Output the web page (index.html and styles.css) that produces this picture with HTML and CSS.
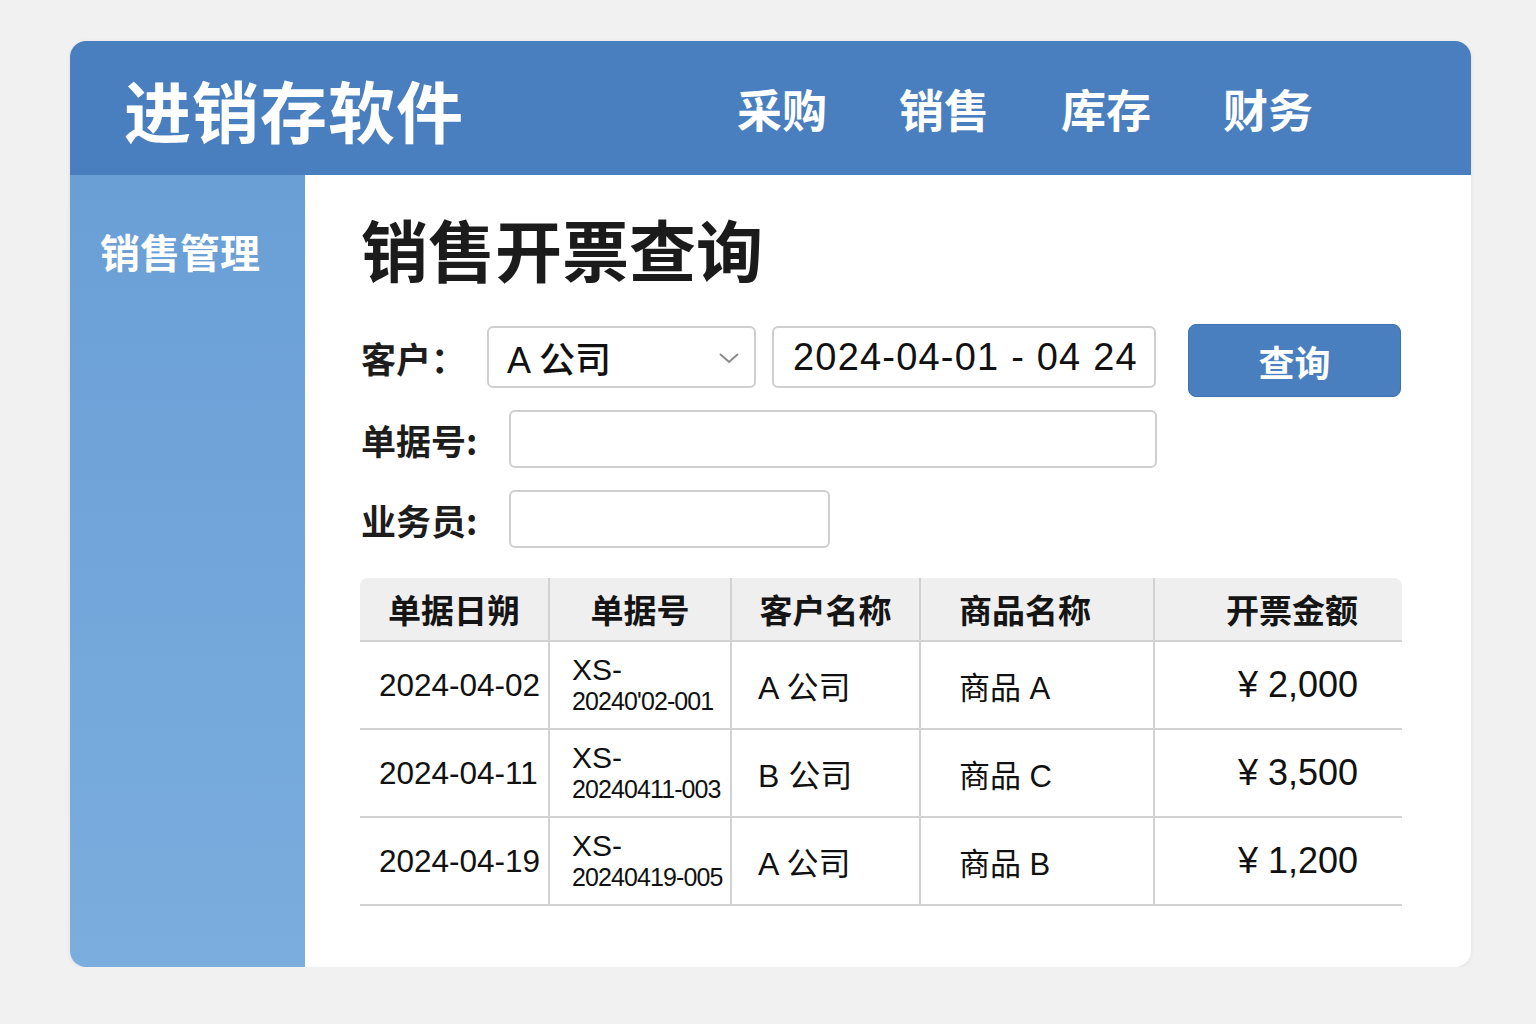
FILE: index.html
```html
<!doctype html>
<html lang="zh-CN">
  <head>
    <meta charset="UTF-8" />
    <meta name="viewport" content="width=device-width, initial-scale=1.0"/>
    <title>进销存软件 - 销售开票查询</title>
    <link rel="stylesheet" href="styles.css">
  </head>
  <body>
    <div class="app">
      <header class="topbar">
        <div class="brand">进销存软件</div>
        <nav class="nav">
          <a href="#">采购</a>
          <a href="#">销售</a>
          <a href="#">库存</a>
          <a href="#">财务</a>
        </nav>
      </header>

      <div class="layout">
        <aside class="sidebar">
          <div class="side-item">销售管理</div>
        </aside>

        <main class="main">
          <h1>销售开票查询</h1>

          <div class="form-row row-customer">
            <label class="label label-short">客户：</label>
            <div class="field select">
              <span>A 公司</span>
              <svg class="chev" width="22" height="14" viewBox="0 0 22 14">
                <polyline points="2,3 11,11 20,3" fill="none" stroke="#8a8a8a" stroke-width="2"/>
              </svg>
            </div>
            <div class="field date">2024-04-01 - 04 24</div>
            <button class="btn">查询</button>
          </div>

          <div class="form-row row-bill">
            <label class="label">单据号:</label>
            <div class="field input-wide"></div>
          </div>

          <div class="form-row row-staff">
            <label class="label">业务员:</label>
            <div class="field input-small"></div>
          </div>

          <table class="grid">
            <thead>
              <tr>
                <th class="c-date">单据日朔</th>
                <th class="c-no">单据号</th>
                <th class="c-cust">客户名称</th>
                <th class="c-goods">商品名称</th>
                <th class="c-amt">开票金额</th>
              </tr>
            </thead>
            <tbody>
              <tr>
                <td class="c-date">2024-04-02</td>
                <td class="c-no"><span class="no-top">XS-</span><span class="no-bottom">20240'02-001</span></td>
                <td class="c-cust">A 公司</td>
                <td class="c-goods">商品 A</td>
                <td class="c-amt">¥ 2,000</td>
              </tr>
              <tr>
                <td class="c-date">2024-04-11</td>
                <td class="c-no"><span class="no-top">XS-</span><span class="no-bottom">20240411-003</span></td>
                <td class="c-cust">B 公司</td>
                <td class="c-goods">商品 C</td>
                <td class="c-amt">¥ 3,500</td>
              </tr>
              <tr>
                <td class="c-date">2024-04-19</td>
                <td class="c-no"><span class="no-top">XS-</span><span class="no-bottom">20240419-005</span></td>
                <td class="c-cust">A 公司</td>
                <td class="c-goods">商品 B</td>
                <td class="c-amt">¥ 1,200</td>
              </tr>
            </tbody>
          </table>
        </main>
      </div>
    </div>
  </body>
</html>
```

FILE: styles.css
```css
body {
  margin: 0;
  padding: 41px 0 0 70px;
  background: #f1f1f1;
  font-family: "Liberation Sans", "Noto Sans CJK SC", sans-serif;
  color: #111;
}
.app {
  width: 1401px;
  height: 926px;
  display: flex;
  flex-direction: column;
  background: #fff;
  border-radius: 16px;
  overflow: hidden;
  box-shadow: 0 1px 4px rgba(0, 0, 0, 0.08);
}

/* top bar */
.topbar {
  height: 134px;
  flex-shrink: 0;
  display: flex;
  align-items: center;
  padding: 0 158px 0 54px;
  background: #497ebf;
  color: #fff;
}
.brand {
  font-family: "Noto Sans CJK SC", sans-serif;
  font-size: 67px;
  font-weight: bold;
  letter-spacing: 1px;
}
.nav {
  margin-left: auto;
  display: flex;
  gap: 72px;
}
.nav a {
  font-family: "Noto Sans CJK SC", sans-serif;
  font-size: 45px;
  font-weight: bold;
  color: #fff;
  text-decoration: none;
}

/* body */
.layout {
  flex: 1;
  display: flex;
}
.sidebar {
  width: 235px;
  flex-shrink: 0;
  background: linear-gradient(180deg, #6a9fd6 0%, #7badde 100%);
}
.side-item {
  padding: 47px 0 0 30px;
  font-family: "Noto Sans CJK SC", sans-serif;
  font-size: 40px;
  font-weight: bold;
  color: #fff;
}
.main {
  flex: 1;
  padding: 29px 69px 0 56px;
}
.main h1 {
  margin: 0 0 25px;
  font-family: "Noto Sans CJK SC", sans-serif;
  font-size: 67px;
  font-weight: bold;
  line-height: 88px;
  color: #1b1b1b;
}

/* filter form */
.form-row {
  display: flex;
  align-items: center;
}
.row-customer {
  margin-bottom: 13px;
}
.row-bill {
  margin-bottom: 22px;
}
.row-customer .btn {
  margin: 7px 0 0 32px;
}
.label {
  width: 148px;
  font-family: "Noto Sans CJK SC", sans-serif;
  font-size: 35px;
  font-weight: 600;
  color: #1d1d1d;
}
.label-short {
  width: 126px;
}
.field {
  box-sizing: border-box;
  border: 2px solid #cfcfcf;
  border-radius: 6px;
  background: #fff;
  display: flex;
  align-items: center;
}
.select {
  width: 269px;
  height: 62px;
  padding: 0 14px 0 18px;
  justify-content: space-between;
  font-size: 36px;
  font-weight: 500;
}
.chev {
  margin-top: 2px;
}
.date {
  width: 384px;
  height: 62px;
  margin-left: 16px;
  padding-left: 19px;
  font-size: 38px;
  letter-spacing: 1.2px;
}
.input-wide {
  width: 648px;
  height: 58px;
}
.input-small {
  width: 321px;
  height: 58px;
}
.btn {
  width: 213px;
  height: 73px;
  border: 1px solid #3f72b3;
  border-radius: 8px;
  background: #497ebf;
  color: #fff;
  font-family: "Noto Sans CJK SC", sans-serif;
  font-size: 36px;
  font-weight: bold;
  cursor: pointer;
}

/* result table */
.grid {
  width: 1042px;
  margin: 30px 0 0 -1px;
  table-layout: fixed;
  border-collapse: separate;
  border-spacing: 0;
}
.grid th,
.grid td {
  box-sizing: border-box;
  padding: 0;
  white-space: nowrap;
}
.grid th {
  height: 64px;
  background: #efefef;
  border-bottom: 2px solid #d2d2d2;
  font-family: "Noto Sans CJK SC", sans-serif;
  font-size: 33px;
  font-weight: bold;
  color: #151515;
  text-align: center;
}
.grid th:first-child {
  border-top-left-radius: 8px;
}
.grid th:last-child {
  border-top-right-radius: 8px;
}
.grid th + th,
.grid td + td {
  border-left: 2px solid #d2d2d2;
}
.grid td {
  height: 88px;
  border-bottom: 2px solid #d2d2d2;
  font-size: 32px;
  color: #111;
  vertical-align: middle;
}
.c-date {
  width: 188px;
}
.c-no {
  width: 182px;
}
.c-cust {
  width: 189px;
}
.c-goods {
  width: 234px;
}
.c-amt {
  width: 249px;
}
.grid td.c-date {
  padding-left: 19px;
  font-size: 31.5px;
}
.grid td.c-no {
  padding-left: 22px;
}
.no-top {
  display: block;
  font-size: 30px;
  line-height: 33px;
}
.no-bottom {
  display: block;
  font-size: 25px;
  line-height: 31px;
  letter-spacing: -0.9px;
}
.grid td.c-cust {
  padding-left: 26px;
}
.grid th.c-goods {
  text-align: left;
  padding-left: 38px;
}
.grid td.c-goods {
  padding-left: 38px;
  font-size: 31px;
}
.grid th.c-amt {
  text-align: right;
  padding-right: 44px;
}
.grid td.c-amt {
  text-align: right;
  padding-right: 44px;
  font-size: 36px;
}
```
